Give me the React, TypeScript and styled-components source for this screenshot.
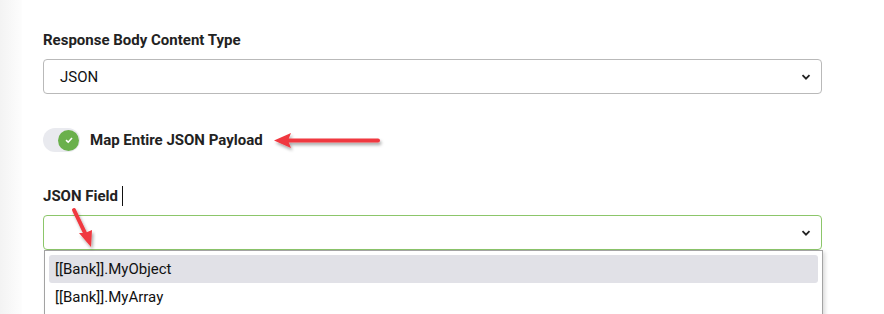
import React from "react";
import styled, { createGlobalStyle } from "styled-components";

const Global = createGlobalStyle`
  html, body { margin: 0; padding: 0; background: #fff; }
  body { font-family: Roboto, "Liberation Sans", Arial, sans-serif; color: #212121; }
  * { box-sizing: border-box; }
`;

const Page = styled.div`
  display: flex;
  width: 884px;
  height: 314px;
  overflow: hidden;
  position: relative;
`;

const Gutter = styled.div`
  width: 22px;
  flex: none;
  background: linear-gradient(to right, #f3f3f3, #fafafa 70%, #fdfdfd);
`;

const Content = styled.div`
  display: flex;
  flex-direction: column;
  padding: 31px 0 0 21px;
  width: 800px;
  & > * { flex-shrink: 0; }
`;

const Label = styled.div`
  font-size: 15px;
  font-weight: 700;
  color: #222;
  line-height: 18px;
  height: 18px;
  display: flex;
  align-items: center;
  flex-shrink: 0;
`;

const Caret = styled.span`
  display: inline-block;
  width: 1px;
  height: 20px;
  background: #111;
  margin-left: 4px;
`;

const Select = styled.div<{ $focused?: boolean }>`
  margin-top: 10px;
  height: 35px;
  flex-shrink: 0;
  width: 779px;
  border: 1px solid ${(p) => (p.$focused ? "#8cc66a" : "#b9b9b9")};
  border-radius: 4px;
  display: flex;
  align-items: center;
  justify-content: space-between;
  padding: 0 9px 0 16px;
  font-size: 15px;
  color: #111;
  background: #fff;
`;

const ToggleRow = styled.div`
  display: flex;
  align-items: center;
  margin-top: 34px;
  gap: 10px;
`;

const Track = styled.div`
  width: 37px;
  height: 24px;
  border-radius: 12px;
  background: #e9eaef;
  display: flex;
  align-items: center;
  justify-content: flex-end;
  padding-right: 1px;
`;

const Knob = styled.div`
  width: 21px;
  height: 21px;
  border-radius: 50%;
  background: #6ab04c;
  display: flex;
  align-items: center;
  justify-content: center;
`;

const ToggleText = styled.span`
  font-size: 15px;
  font-weight: 700;
  color: #222;
`;

const FieldGroup = styled.div`
  margin-top: 35px;
  display: flex;
  flex-direction: column;
  & > * { flex-shrink: 0; }
`;

const List = styled.div`
  width: 779px;
  margin-left: 1px;
  border: 1px solid #a3a3a3;
  border-bottom: none;
  box-shadow: 2px 2px 4px rgba(0, 0, 0, 0.15);
  padding: 4px 4px 0 4px;
  background: #fff;
  display: flex;
  flex-direction: column;
  height: 70px;
`;

const Option = styled.div<{ $active?: boolean }>`
  height: 28px;
  flex-shrink: 0;
  display: flex;
  align-items: center;
  padding-left: 6px;
  font-size: 15px;
  color: #111;
  border-radius: 3px;
  background: ${(p) => (p.$active ? "#e1e1e7" : "transparent")};
`;

const Overlay = styled.svg`
  position: absolute;
  left: 0;
  top: 0;
  pointer-events: none;
`;

const Chevron = () => (
  <svg width="12" height="12" viewBox="0 0 12 12">
    <path d="M2.5 4.2 L6 7.7 L9.5 4.2" fill="none" stroke="#222" strokeWidth="1.8" />
  </svg>
);

export default function App() {
  return (
    <>
      <Global />
      <Page>
        <Gutter />
        <Content>
          <Label>Response Body Content Type</Label>
          <Select>
            <span>JSON</span>
            <Chevron />
          </Select>
          <ToggleRow>
            <Track>
              <Knob>
                <svg width="10" height="10" viewBox="0 0 10 10">
                  <path d="M2 5.2 L4.2 7.2 L8 3" fill="none" stroke="#fff" strokeWidth="1.6" />
                </svg>
              </Knob>
            </Track>
            <ToggleText>Map Entire JSON Payload</ToggleText>
          </ToggleRow>
          <FieldGroup>
            <Label>
              JSON Field<Caret />
            </Label>
            <Select $focused>
              <span />
              <Chevron />
            </Select>
            <List>
              <Option $active>[[Bank]].MyObject</Option>
              <Option>[[Bank]].MyArray</Option>
            </List>
          </FieldGroup>
        </Content>
        <Overlay width="884" height="314" viewBox="0 0 884 314">
          <defs>
            <filter id="sh" x="-20%" y="-50%" width="140%" height="200%">
              <feDropShadow dx="1.5" dy="2.5" stdDeviation="1.8" floodColor="#000" floodOpacity="0.35" />
            </filter>
          </defs>
          <g filter="url(#sh)">
            <line x1="378" y1="140.5" x2="288" y2="140.5" stroke="#f0393f" strokeWidth="4" strokeLinecap="round" />
            <path d="M274 140.5 L291 133 L288 140.5 L291 148 Z" fill="#f0393f" />
          </g>
          <g filter="url(#sh)">
            <line x1="74" y1="210" x2="85" y2="233" stroke="#f0393f" strokeWidth="4" strokeLinecap="round" />
            <path d="M91 247 L79 233 L85 233 L92 230 Z" fill="#f0393f" />
          </g>
        </Overlay>
      </Page>
    </>
  );
}
